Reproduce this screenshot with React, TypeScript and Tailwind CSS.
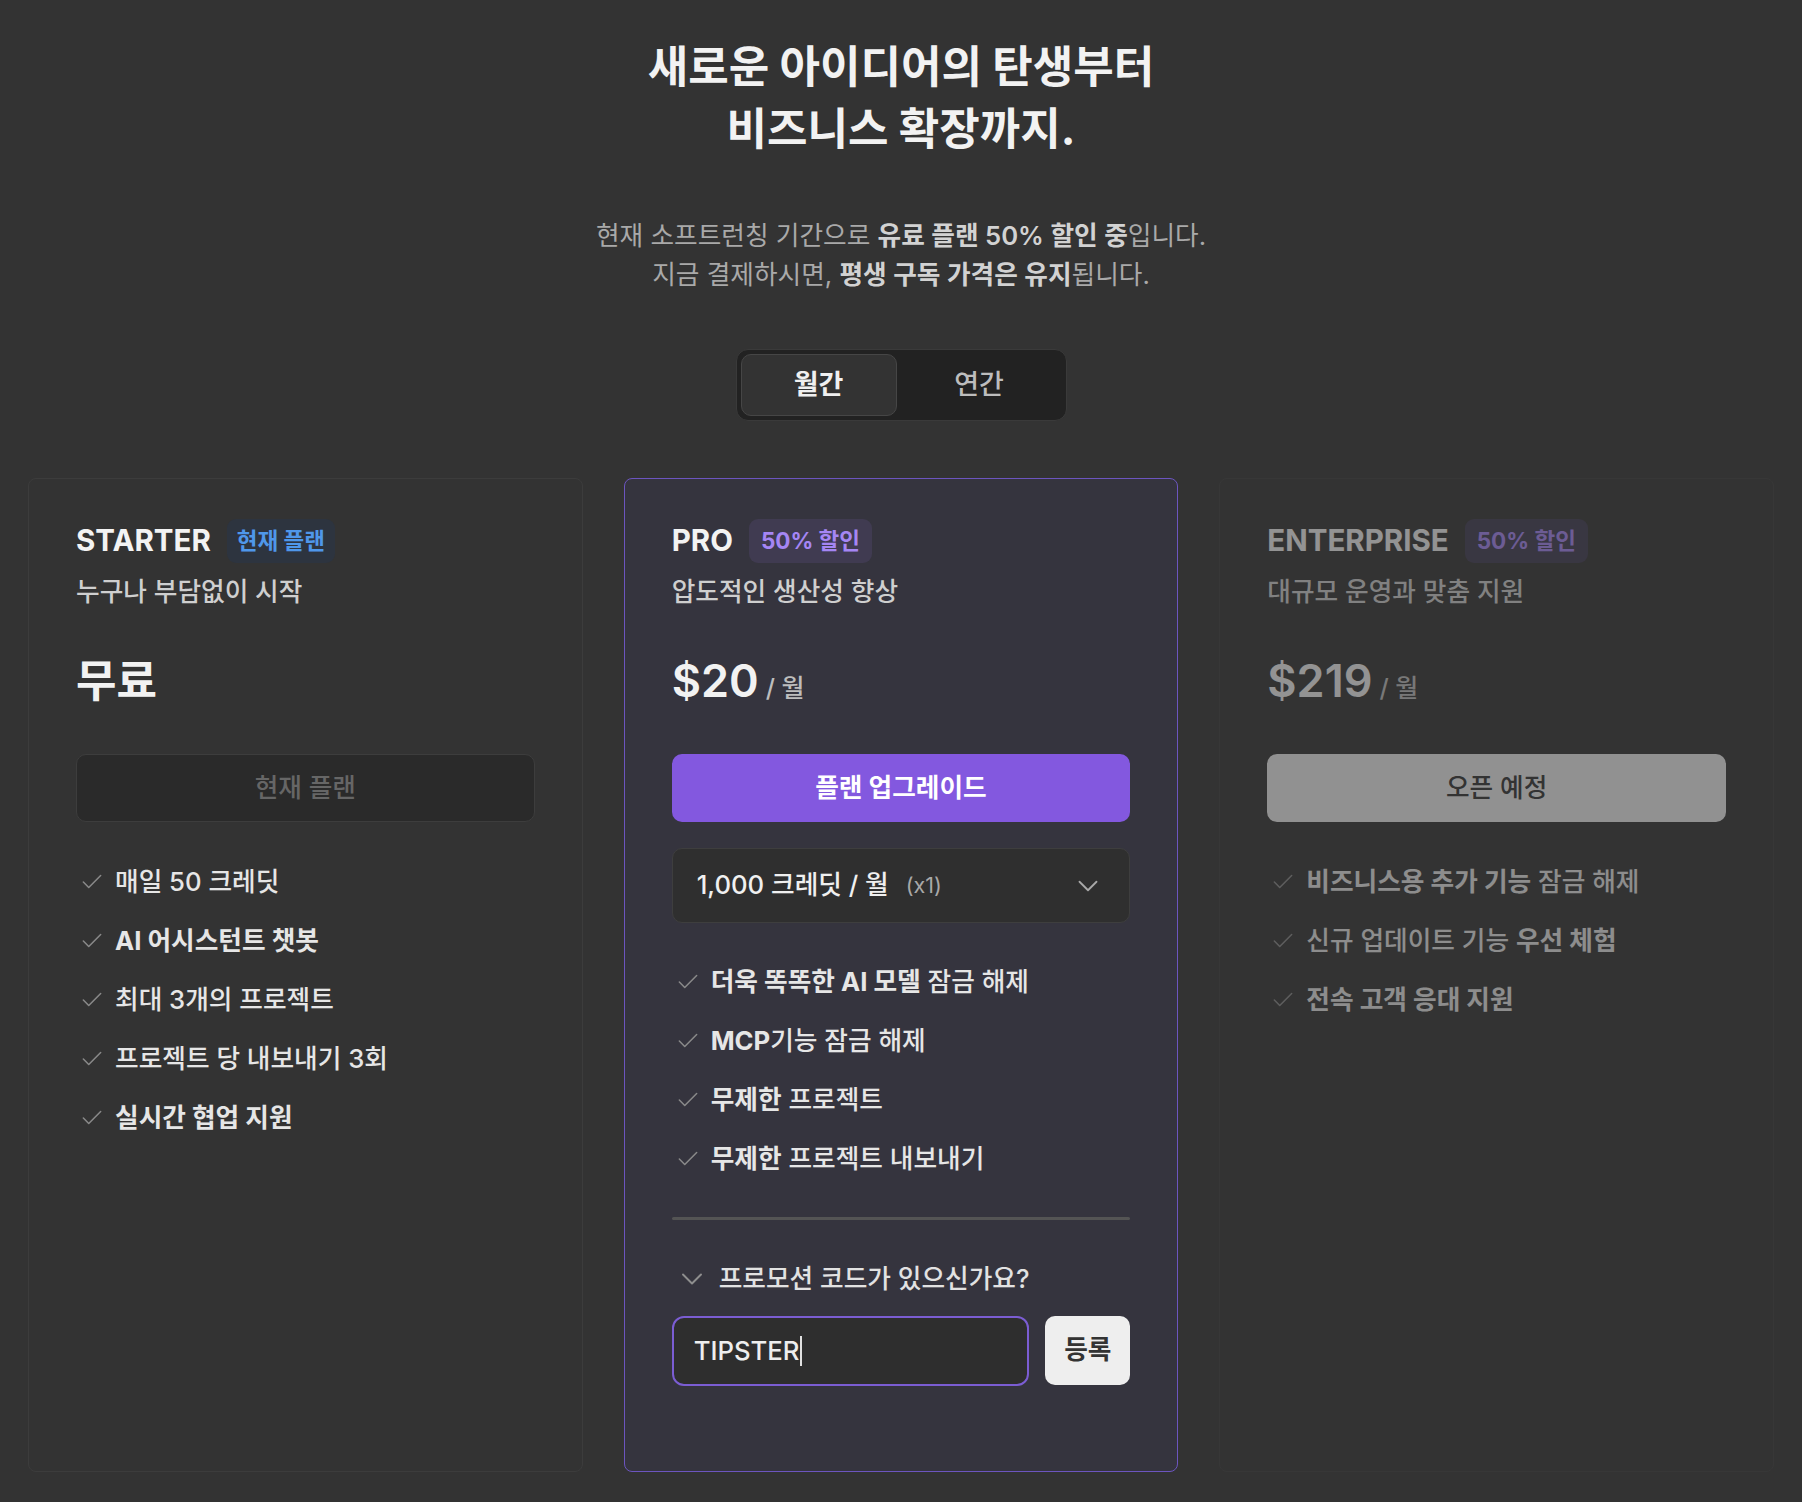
import { Check, ChevronDown } from "lucide-react";

type Part = [string, boolean];

function Feature({ parts }: { parts: Part[] }) {
  return (
    <li className="flex h-[59px] items-center">
      <Check className="ml-[3px] mr-[10px] h-[26px] w-[26px] shrink-0 text-[#8a8a8a]" strokeWidth={1.4} />
      <span className="text-[25.7px] leading-[36px] text-[#e6e6e6]">
        {parts.map(([t, b], i) => (
          <span key={i} className={b ? "font-bold" : "font-medium"}>
            {t}
          </span>
        ))}
      </span>
    </li>
  );
}

function Header({ name, badge, tone }: { name: string; badge: string; tone: "blue" | "purple" }) {
  return (
    <div className="flex h-[44px] items-center gap-4">
      <span className="text-[29.5px] font-bold leading-none text-[#f3f3f3]">{name}</span>
      <span
        className={
          tone === "blue"
            ? "flex h-[44px] items-center rounded-[9px] bg-[#2d343f] px-[10px] text-[22.5px] font-bold text-[#4f97ea]"
            : "flex h-[44px] items-center rounded-[9px] bg-[#403b51] px-[12px] text-[22.5px] font-bold text-[#a586f4]"
        }
      >
        {badge}
      </span>
    </div>
  );
}

function Price({ amount }: { amount: string }) {
  return (
    <div className="mt-[40px] flex h-[62px] items-baseline leading-[62px]">
      <span className="text-[45px] font-semibold text-[#f2f2f2]">{amount}</span>
      <span className="ml-[7px] text-[25px] font-medium text-[#bdbdbd]">/ 월</span>
    </div>
  );
}

export default function App() {
  const starter: Part[][] = [
    [["매일 50 크레딧", false]],
    [["AI 어시스턴트 챗봇", true]],
    [["최대 3개의 프로젝트", false]],
    [["프로젝트 당 내보내기 3회", false]],
    [["실시간 협업 지원", true]],
  ];
  const pro: Part[][] = [
    [["더욱 똑똑한 AI 모델", true], [" 잠금 해제", false]],
    [["MCP", true], ["기능 잠금 해제", false]],
    [["무제한", true], [" 프로젝트", false]],
    [["무제한", true], [" 프로젝트 내보내기", false]],
  ];
  const ent: Part[][] = [
    [["비즈니스용 추가 기능", true], [" 잠금 해제", false]],
    [["신규 업데이트 기능 ", false], ["우선 체험", true]],
    [["전속 고객 응대 지원", true]],
  ];

  return (
    <div className="min-h-screen bg-[#333333] pb-[30px] font-['Inter','Noto_Sans_CJK_KR',sans-serif]">
      <div className="flex flex-col items-center pt-[36px]">
        <h1 className="text-center text-[44px] font-bold leading-[62px] text-[#f2f2f2]">
          새로운 아이디어의 탄생부터
          <br />
          비즈니스 확장까지.
        </h1>
        <p className="mt-[56px] text-center text-[25.7px] leading-[39px] text-[#a9a9a9]">
          현재 소프트런칭 기간으로 <span className="font-semibold text-[#d2d2d2]">유료 플랜 50% 할인 중</span>입니다.
          <br />
          지금 결제하시면, <span className="font-semibold text-[#d2d2d2]">평생 구독 가격은 유지</span>됩니다.
        </p>

        <div className="mt-[55px] flex rounded-[12px] border border-[#3a3a3a] bg-[#222222] p-[4px]">
          <div className="flex h-[62px] w-[156px] items-center justify-center rounded-[10px] border border-[#464646] bg-[#333333] text-[27px] font-bold text-[#f0f0f0]">
            월간
          </div>
          <div className="flex h-[62px] w-[165px] items-center justify-center text-[27px] font-medium text-[#bdbdbd]">
            연간
          </div>
        </div>
      </div>

      <div className="mt-[57px] grid grid-cols-3 gap-[41px] px-[28px]">
        {/* STARTER */}
        <div className="rounded-[8px] border border-[#3c3c3c] px-[47px] pt-[40px]">
          <Header name="STARTER" badge="현재 플랜" tone="blue" />
          <p className="mt-[11px] text-[25.7px] font-medium leading-[36px] text-[#cfcfcf]">누구나 부담없이 시작</p>
          <div className="mt-[40px] flex h-[62px] items-center">
            <span className="text-[44px] font-semibold text-[#f2f2f2]">무료</span>
          </div>
          <div className="mt-[42px] flex h-[68px] items-center justify-center rounded-[10px] border border-[#3d3d3d] bg-[#2a2a2a] text-[25.7px] font-medium text-[#666666]">
            현재 플랜
          </div>
          <ul className="mt-[30px]">
            {starter.map((p, i) => (
              <Feature key={i} parts={p} />
            ))}
          </ul>
        </div>

        {/* PRO */}
        <div className="rounded-[8px] border border-[#6c55bf] bg-[#35343e] px-[47px] pb-[85px] pt-[40px]">
          <Header name="PRO" badge="50% 할인" tone="purple" />
          <p className="mt-[11px] text-[25.7px] font-medium leading-[36px] text-[#cfcfcf]">압도적인 생산성 향상</p>
          <Price amount="$20" />
          <div className="mt-[42px] flex h-[68px] items-center justify-center rounded-[10px] bg-[#8358df] text-[25.7px] font-bold text-white">
            플랜 업그레이드
          </div>
          <div className="mt-[26px] flex h-[75px] items-center rounded-[10px] border border-[#3e3e3e] bg-[#2f2f2f] pl-[24px] pr-[24px]">
            <span className="text-[25.7px] font-medium text-[#f0f0f0]">1,000 크레딧 / 월</span>
            <span className="ml-[17px] text-[21.5px] text-[#a8a8a8]">(x1)</span>
            <ChevronDown className="ml-auto h-[34px] w-[34px] text-[#a8a8a8]" strokeWidth={1.3} />
          </div>
          <ul className="mt-[29px]">
            {pro.map((p, i) => (
              <Feature key={i} parts={p} />
            ))}
          </ul>
          <div className="mt-[29px] h-[3px] rounded-full bg-[#545454]" />
          <div className="mt-[41px] flex h-[36px] items-center">
            <ChevronDown className="ml-[2px] mr-[9px] h-[36px] w-[36px] text-[#8e8e8e]" strokeWidth={1.3} />
            <span className="text-[25.7px] font-medium text-[#e2e2e2]">프로모션 코드가 있으신가요?</span>
          </div>
          <div className="mt-[19px] flex gap-4">
            <div className="flex h-[70px] flex-1 items-center rounded-[12px] border-2 border-[#7b5dd3] bg-[#2e2e2e] pl-[20px]">
              <span className="text-[25.7px] font-medium text-[#eeeeee]">TIPSTER</span>
              <span className="ml-[1px] inline-block h-[30px] w-[2px] bg-[#e0e0e0]" />
            </div>
            <div className="flex h-[69px] w-[85px] items-center justify-center rounded-[10px] bg-[#eeeeee] text-[25.7px] font-bold text-[#333333]">
              등록
            </div>
          </div>
        </div>

        {/* ENTERPRISE */}
        <div className="rounded-[8px] border border-[#3c3c3c] px-[47px] pt-[40px] opacity-50">
          <Header name="ENTERPRISE" badge="50% 할인" tone="purple" />
          <p className="mt-[11px] text-[25.7px] font-medium leading-[36px] text-[#cfcfcf]">대규모 운영과 맞춤 지원</p>
          <Price amount="$219" />
          <div className="mt-[42px] flex h-[68px] items-center justify-center rounded-[10px] bg-[#eeeeee] text-[25.7px] font-medium text-[#333333]">
            오픈 예정
          </div>
          <ul className="mt-[30px]">
            {ent.map((p, i) => (
              <Feature key={i} parts={p} />
            ))}
          </ul>
        </div>
      </div>
    </div>
  );
}
